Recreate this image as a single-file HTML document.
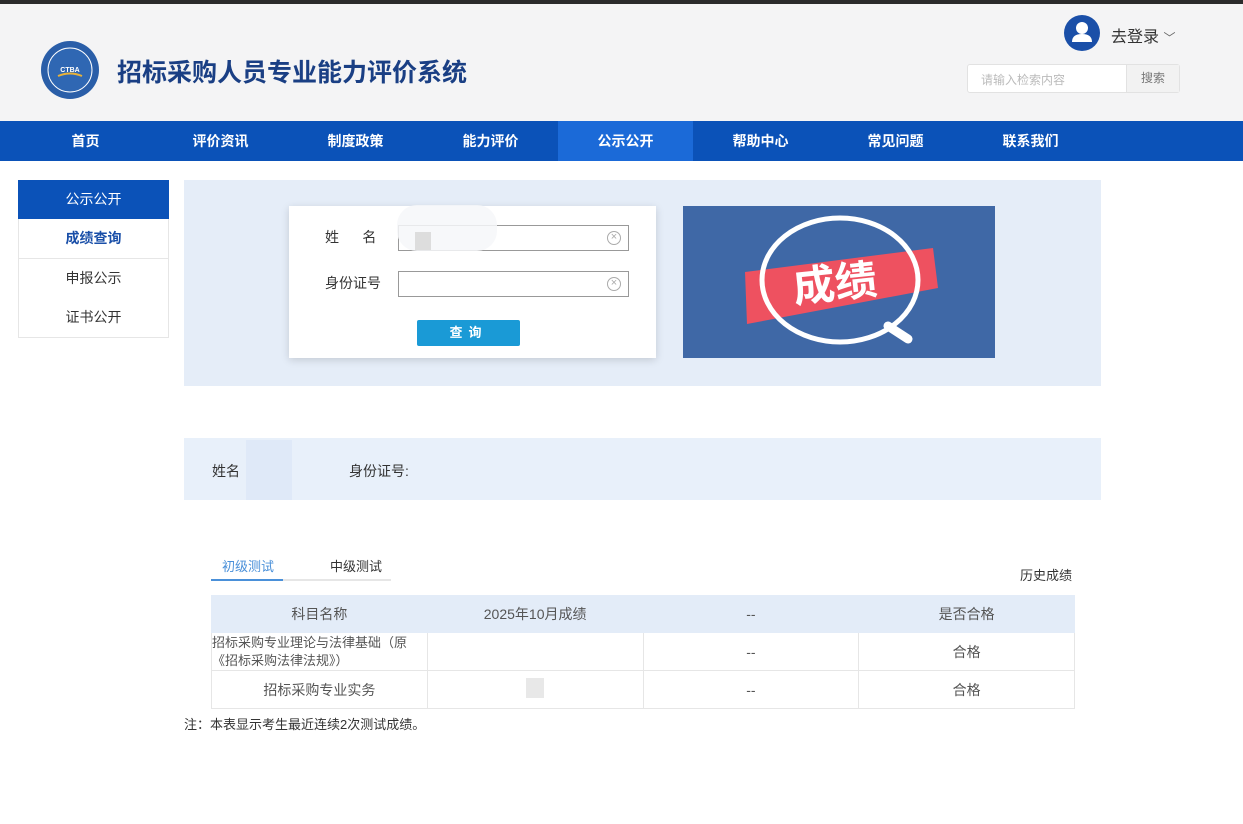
<!DOCTYPE html>
<html><head><meta charset="utf-8"><style>
*{margin:0;padding:0;box-sizing:border-box}
body{width:1243px;height:824px;background:#fff;font-family:"Liberation Sans","Noto Sans CJK SC",sans-serif;position:relative;overflow:hidden;color:#333;font-size:14px}
.abs{position:absolute}
.top{left:0;top:0;width:1243px;height:4px;background:#2b2b2b}
.header{left:0;top:4px;width:1243px;height:117px;background:#f4f4f5}
.nav{left:0;top:121px;width:1243px;height:40px;background:#0b52b8}
.nav div{position:absolute;top:0;width:135px;height:40px;line-height:40px;text-align:center;color:#fff;font-weight:bold;font-size:14px}
.side div{position:absolute;left:18px;width:151px;height:40px;line-height:39px;text-align:center;border:1px solid #e6e6e6;border-top:none;font-size:14px;color:#333;background:#fff}
.inp{position:absolute;left:398px;width:231px;height:26px;border:1px solid #999;background:#fff}
.x{position:absolute;right:7px;top:5px;width:14px;height:14px;border:1px solid #aaa;border-radius:50%;color:#aaa;font-size:11px;line-height:11px;text-align:center}
table{border-collapse:collapse;position:absolute;left:211px;top:595px;width:864px;font-size:14px;color:#555}
td{border:1px solid #e6e6e6;text-align:center;width:216px;height:38px}
tr.h td{background:#e3ecf8;border-color:#e3ecf8;height:37px}
</style></head><body>
<div class="abs top"></div>
<div class="abs header"></div>
<svg class="abs" style="left:39px;top:39px" width="62" height="62" viewBox="0 0 62 62">
<circle cx="31" cy="31" r="29" fill="#2a5ea8"/><circle cx="31" cy="31" r="22" fill="#2f67b3" stroke="#fff" stroke-width="1"/>
<text x="31" y="33" font-size="7" fill="#fff" text-anchor="middle" font-weight="bold" font-family="Liberation Sans">CTBA</text>
<path d="M19 37 Q31 32 43 37" stroke="#e8b23a" stroke-width="2" fill="none"/></svg>
<div class="abs" style="left:117px;top:53px;font-size:25px;font-weight:bold;color:#1a3f84">招标采购人员专业能力评价系统</div>
<svg class="abs" style="left:1064px;top:15px" width="36" height="36" viewBox="0 0 36 36"><circle cx="18" cy="18" r="18" fill="#1a4fa8"/><circle cx="18" cy="13" r="6" fill="#fff"/><path d="M8 27 Q8 19 18 19 Q28 19 28 27 Z" fill="#fff"/></svg>
<div class="abs" style="left:1111px;top:23px;font-size:16px;color:#333">去登录 <span style="font-size:12px;color:#666">﹀</span></div>
<div class="abs" style="left:967px;top:64px;width:213px;height:29px;border:1px solid #e2e2e2;border-radius:3px;background:#fff"></div>
<div class="abs" style="left:981px;top:71px;font-size:12px;color:#bbb">请输入检索内容</div>
<div class="abs" style="left:1126px;top:65px;width:53px;height:27px;background:#f2f2f2;border-left:1px solid #e2e2e2;text-align:center;line-height:27px;font-size:12px;color:#777">搜索</div>
<div class="abs nav">
<div style="left:18px">首页</div><div style="left:153px">评价资讯</div><div style="left:288px">制度政策</div><div style="left:423px">能力评价</div><div style="left:558px;background:#1b6ad8">公示公开</div><div style="left:693px">帮助中心</div><div style="left:828px">常见问题</div><div style="left:963px">联系我们</div>
</div>
<div class="side">
<div style="top:180px;background:#0b52b8;color:#fff;border-color:#0b52b8">公示公开</div>
<div style="top:219px;color:#1a4fa8;font-weight:bold">成绩查询</div>
<div style="top:259px">申报公示</div>
<div style="top:298px">证书公开</div>
</div>
<div class="abs" style="left:184px;top:180px;width:917px;height:206px;background:#e5edf8"></div>
<div class="abs" style="left:289px;top:206px;width:367px;height:152px;background:#fff;box-shadow:0 2px 8px rgba(0,0,0,.15)"></div>
<div class="abs" style="left:325px;top:227px">姓&nbsp;&nbsp;&nbsp;&nbsp;&nbsp;&nbsp;名</div>
<div class="abs" style="left:325px;top:273px">身份证号</div>
<div class="inp" style="top:225px"><div class="x">×</div></div>
<div class="abs" style="left:397px;top:205px;width:100px;height:46px;background:rgba(246,247,249,.85);border-radius:20px"></div>
<div class="abs" style="left:415px;top:232px;width:16px;height:18px;background:#ddd"></div>
<div class="inp" style="top:271px"><div class="x">×</div></div>
<div class="abs" style="left:417px;top:320px;width:103px;height:26px;background:#1a9ad6;border-radius:2px;color:#fff;text-align:center;line-height:26px;font-size:13px;font-weight:bold;letter-spacing:6px">查询</div>
<svg class="abs" style="left:683px;top:206px" width="312" height="152" viewBox="0 0 312 152">
<rect width="312" height="152" fill="#3f68a6"/>
<polygon points="62,66 250,42 255,82 64,118" fill="#ee5160"/>
<ellipse cx="157" cy="74" rx="78" ry="62" fill="none" stroke="#fff" stroke-width="5"/>
<line x1="205" y1="120" x2="225" y2="133" stroke="#fff" stroke-width="9" stroke-linecap="round"/>
<text x="152" y="92" font-size="42" font-weight="bold" fill="#fff" text-anchor="middle" font-family="Noto Sans CJK SC" transform="rotate(-6 152 78)">成绩</text>
</svg>
<div class="abs" style="left:184px;top:438px;width:917px;height:62px;background:#e8f0fa"></div>
<div class="abs" style="left:246px;top:440px;width:46px;height:60px;background:#dfe9f8"></div>
<div class="abs" style="left:212px;top:461px">姓名</div>
<div class="abs" style="left:349px;top:461px">身份证号:</div>
<div class="abs" style="left:222px;top:556px;font-size:13px;color:#4a90d9">初级测试</div>
<div class="abs" style="left:330px;top:556px;font-size:13px;color:#333">中级测试</div>
<div class="abs" style="left:211px;top:579px;width:180px;height:2px;background:#e6e6e6"></div>
<div class="abs" style="left:211px;top:579px;width:72px;height:2px;background:#4a90d9"></div>
<div class="abs" style="left:1020px;top:565px;font-size:13px">历史成绩</div>
<table>
<tr class="h"><td>科目名称</td><td>2025年10月成绩</td><td>--</td><td>是否合格</td></tr>
<tr><td style="text-align:left;line-height:18px;font-size:13px">招标采购专业理论与法律基础（原《招标采购法律法规》）</td><td></td><td>--</td><td>合格</td></tr>
<tr><td>招标采购专业实务</td><td><span style="display:inline-block;width:18px;height:20px;background:#e8e8e8"></span></td><td>--</td><td>合格</td></tr>
</table>
<div class="abs" style="left:184px;top:714px;font-size:13px">注：本表显示考生最近连续2次测试成绩。</div>
</body></html>
